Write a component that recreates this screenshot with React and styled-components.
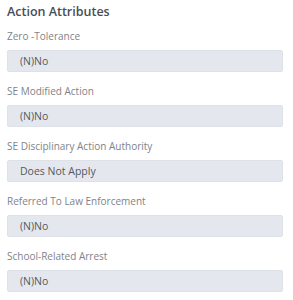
import React from 'react';
import styled, { createGlobalStyle } from 'styled-components';

const GlobalStyle = createGlobalStyle`
  body {
    margin: 0;
    background: #fff;
    font-family: 'Open Sans', 'Liberation Sans', sans-serif;
  }
`;

const Panel = styled.div`
  padding: 3px 10px 0 7px;
`;

const Title = styled.h3`
  margin: 0 0 8px;
  font-size: 12.5px;
  line-height: 18px;
  font-weight: 600;
  color: #4a4d52;
`;

const Field = styled.div`
  margin-bottom: 12px;
`;

const Label = styled.div`
  font-size: 10px;
  line-height: 14px;
  color: #808389;
  margin-bottom: 7px;
`;

const Value = styled.div`
  box-sizing: border-box;
  height: 22px;
  display: flex;
  align-items: center;
  padding-left: 12px;
  background: #e4e8ee;
  border: 1px solid #dde1e8;
  border-radius: 2px;
  font-size: 10.5px;
  color: #55585d;
`;

const fields = [
  { label: 'Zero -Tolerance', value: '(N)No' },
  { label: 'SE Modified Action', value: '(N)No' },
  { label: 'SE Disciplinary Action Authority', value: 'Does Not Apply' },
  { label: 'Referred To Law Enforcement', value: '(N)No' },
  { label: 'School-Related Arrest', value: '(N)No' },
];

const App = () => {
  return (
    <>
      <GlobalStyle />
      <Panel>
        <Title>Action Attributes</Title>
        {fields.map((f) => (
          <Field key={f.label}>
            <Label>{f.label}</Label>
            <Value>{f.value}</Value>
          </Field>
        ))}
      </Panel>
    </>
  );
};

export default App;
